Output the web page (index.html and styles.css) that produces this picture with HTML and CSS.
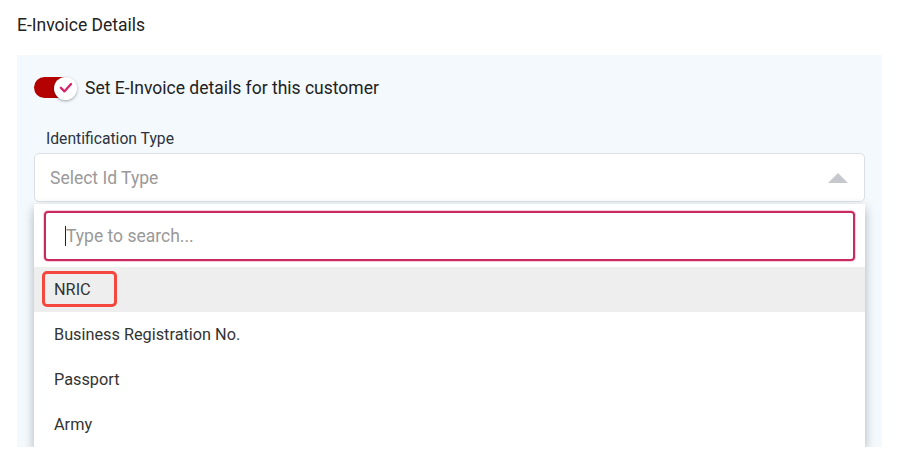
FILE: index.html
```html
<!DOCTYPE html>
<html lang="en">
<head>
<meta charset="utf-8">
<title>E-Invoice Details</title>
<link rel="stylesheet" href="styles.css">
</head>
<body>
<div class="page">
  <h2 class="title">E-Invoice Details</h2>
  <div class="panel">
    <div class="toggle-row">
      <span class="toggle">
        <span class="knob">
          <svg width="14" height="12" viewBox="0 0 14 12"><path d="M1.8 5.8 L5.4 9.4 L12 2" fill="none" stroke="#d6246a" stroke-width="2.3" stroke-linecap="round" stroke-linejoin="round"/></svg>
        </span>
      </span>
      <span class="toggle-label">Set E-Invoice details for this customer</span>
    </div>
    <div class="field">
      <div class="field-label">Identification Type</div>
      <div class="select-wrap">
        <div class="select">
          <span class="select-placeholder">Select Id Type</span>
          <span class="arrow"></span>
        </div>
        <div class="dropdown">
          <div class="search"><span class="cursor"></span><span class="search-placeholder">Type to search...</span></div>
          <ul class="options">
            <li class="option active"><span class="mark"></span>NRIC</li>
            <li class="option">Business Registration No.</li>
            <li class="option">Passport</li>
            <li class="option">Army</li>
          </ul>
        </div>
      </div>
    </div>
  </div>
</div>
</body>
</html>
```
FILE: styles.css
```css
html, body {
  margin: 0;
  background: #ffffff;
  font-family: Roboto, "Noto Sans", Arial, sans-serif;
  color: #222;
}
.page {
  padding: 14px 16px 0 17px;
}
.title {
  margin: 0;
  font-size: 17.5px;
  line-height: 22px;
  font-weight: 400;
  color: #222;
}
.panel {
  margin-top: 19px;
  width: 865px;
  height: 392px;
  box-sizing: border-box;
  background: #f3f9fd;
  padding: 20px 17px 0 17px;
}
.toggle-row {
  display: flex;
  align-items: center;
  height: 25px;
}
.toggle {
  position: relative;
  width: 40px;
  height: 21px;
  border-radius: 11px;
  background: #b30000;
}
.knob {
  position: absolute;
  right: -3px;
  top: -0.5px;
  width: 23px;
  height: 23px;
  border-radius: 50%;
  background: #fff;
  box-shadow: 0 1px 3px rgba(0,0,0,.35);
  display: flex;
  align-items: center;
  justify-content: center;
}
.toggle-label {
  margin-left: 11px;
  font-size: 17.5px;
  color: #222;
}
.field {
  margin-top: 28px;
}
.field-label {
  padding-left: 12px;
  font-size: 15.7px;
  line-height: 21px;
  color: #2c3440;
}
.select-wrap {
  position: relative;
  margin-top: 4px;
}
.select {
  height: 49px;
  box-sizing: border-box;
  border: 1px solid #dcdfe4;
  border-radius: 5px;
  background: #fff;
  display: flex;
  align-items: center;
  justify-content: space-between;
  padding: 1px 16px 0 15px;
}
.select-placeholder {
  font-size: 17.5px;
  color: #999;
}
.arrow {
  width: 0;
  height: 0;
  border-left: 10px solid transparent;
  border-right: 10px solid transparent;
  border-bottom: 10px solid #c5c9ce;
}
.dropdown {
  position: absolute;
  left: 0;
  right: 0;
  top: 51px;
  background: #fff;
  box-shadow: 0 4px 10px rgba(0,0,0,.28);
  padding: 7px 10px 0;
  z-index: 2;
}
.search {
  height: 50px;
  box-sizing: border-box;
  border: 2px solid #c92a5e;
  border-radius: 4px;
  box-shadow: 0 0 0 1px rgba(240,110,160,.35);
  display: flex;
  align-items: center;
  padding-left: 19px;
}
.cursor {
  width: 1px;
  height: 20px;
  background: #222;
}
.search-placeholder {
  font-size: 17.5px;
  color: #999;
}
.options {
  list-style: none;
  margin: 6px -10px 0;
  padding: 0;
}
.option {
  position: relative;
  height: 45px;
  display: flex;
  align-items: center;
  padding-left: 20px;
  font-size: 16.3px;
  color: #333;
}
.option.active {
  background: #eeeeee;
}
.mark {
  position: absolute;
  left: 8px;
  top: 4px;
  width: 75px;
  height: 36px;
  box-sizing: border-box;
  border: 3px solid #f4483e;
  border-radius: 5px;
}
```
